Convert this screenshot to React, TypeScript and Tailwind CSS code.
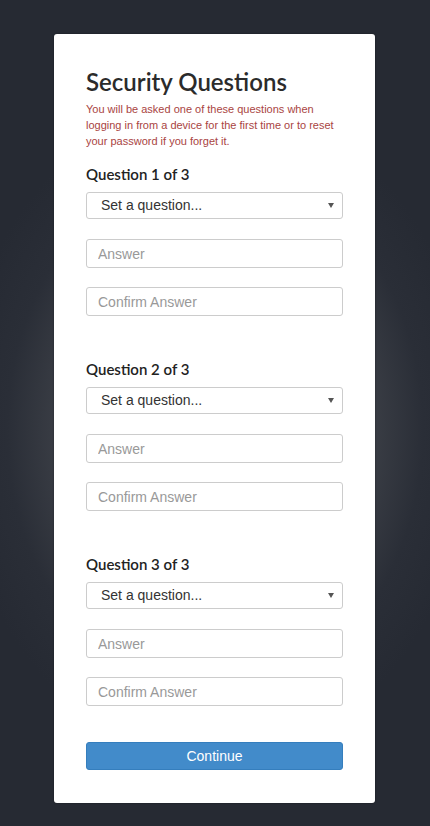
import { useState } from 'react';

type Answer = { question: string; answer: string; confirm: string };

function QuestionBlock({ index, value, onChange }: { index: number; value: Answer; onChange: (v: Answer) => void }) {
  return (
    <div className="flex flex-col">
      <h2 className="font-['Lato',sans-serif] text-[15px] font-semibold leading-[18px] text-[#222]">Question {index} of 3</h2>
      <div className="relative mt-[9px]">
        <select
          value={value.question}
          onChange={(e) => onChange({ ...value, question: e.target.value })}
          className="h-[27px] w-full appearance-none rounded-[3px] border border-[#ccc] bg-white pl-[14px] font-['Liberation_Sans',Arial,sans-serif] text-[14px] text-[#333] outline-none"
        >
          <option value="">Set a question...</option>
          <option value="pet">What was the name of your first pet?</option>
          <option value="city">In what city were you born?</option>
        </select>
        <span className="pointer-events-none absolute right-[9px] top-[11px] h-0 w-0 border-x-[3px] border-t-[5px] border-x-transparent border-t-[#555]" />
      </div>
      <input
        value={value.answer}
        onChange={(e) => onChange({ ...value, answer: e.target.value })}
        placeholder="Answer"
        className="mt-[20px] h-[29px] w-full rounded-[3px] border border-[#ccc] bg-white px-[11px] font-['Liberation_Sans',Arial,sans-serif] text-[14px] text-[#333] outline-none placeholder:text-[#999]"
      />
      <input
        value={value.confirm}
        onChange={(e) => onChange({ ...value, confirm: e.target.value })}
        placeholder="Confirm Answer"
        className="mt-[19px] h-[29px] w-full rounded-[3px] border border-[#ccc] bg-white px-[11px] font-['Liberation_Sans',Arial,sans-serif] text-[14px] text-[#333] outline-none placeholder:text-[#999]"
      />
    </div>
  );
}

export default function App() {
  const [answers, setAnswers] = useState<Answer[]>([
    { question: '', answer: '', confirm: '' },
    { question: '', answer: '', confirm: '' },
    { question: '', answer: '', confirm: '' },
  ]);

  return (
    <div className="min-h-screen bg-[#262a33] bg-[radial-gradient(ellipse_260px_330px_at_50%_430px,#76787b_0%,#4a4d53_40%,#2a2e37_80%,#262a33_100%)] pt-[34px] pb-[25px]">
      <div className="ml-[54px] w-[321px] rounded-[3px] bg-white px-[32px] pt-[33px] pb-[33px] shadow-[0_0_2px_rgba(0,0,0,0.4)]">
        <h1 className="font-['Lato',sans-serif] text-[24px] font-semibold leading-[30px] text-[#2b2b2b]">Security Questions</h1>
        <p className="mt-[4px] font-['Liberation_Sans',Arial,sans-serif] text-[11px] leading-[16px] text-[#a94442]">
          You will be asked one of these questions when logging in from a device for the first time or to reset your password if you forget it.
        </p>
        <div className="mt-[16px] flex flex-col gap-[44px]">
          {answers.map((a, i) => (
            <QuestionBlock
              key={i}
              index={i + 1}
              value={a}
              onChange={(v) => setAnswers((prev) => prev.map((p, j) => (j === i ? v : p)))}
            />
          ))}
        </div>
        <button
          type="button"
          className="mt-[36px] h-[28px] w-full rounded-[3px] border border-[#357ebd] bg-[#428bca] font-['Liberation_Sans',Arial,sans-serif] text-[14px] text-white"
        >
          Continue
        </button>
      </div>
    </div>
  );
}
